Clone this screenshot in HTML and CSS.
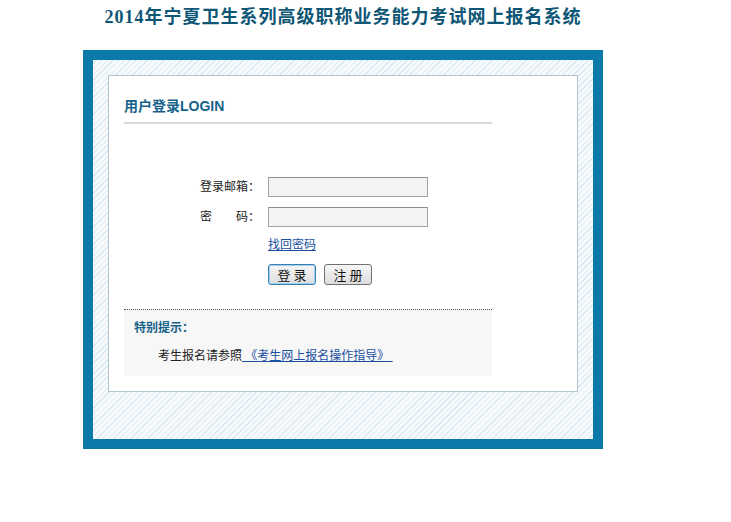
FILE: index.html
```html
<!DOCTYPE html>
<html lang="zh-CN">

<head>
    <meta charset="UTF-8">
    <title>2014年宁夏卫生系列高级职称业务能力考试网上报名系统</title>
    <link rel="stylesheet" href="styles.css">
</head>

<body>
    <div class="page">
        <h1 class="site-title">2014年宁夏卫生系列高级职称业务能力考试网上报名系统</h1>

        <!-- Login frame -->
        <div class="frame">
            <div class="panel">
                <h2 class="panel-title">用户登录LOGIN</h2>

                <form class="login-form" action="#">
                    <label class="field-label" for="email">登录邮箱：</label>
                    <input class="field-input" type="text" id="email">

                    <label class="field-label" for="pwd">密&emsp;&emsp;码：</label>
                    <input class="field-input" type="password" id="pwd">

                    <a class="forgot-link" href="#">找回密码</a>

                    <div class="buttons">
                        <button type="button" class="btn btn-default">登 录</button>
                        <button type="button" class="btn">注 册</button>
                    </div>
                </form>

                <!-- Notice -->
                <div class="notice">
                    <p class="notice-title">特别提示：</p>
                    <p class="notice-text">考生报名请参照<a href="#">&nbsp;《考生网上报名操作指导》&nbsp;</a></p>
                </div>
            </div>
        </div>
    </div>
</body>

</html>
```

FILE: styles.css
```css
/* General */
body {
    margin: 0;
    font-family: "Liberation Sans", "Noto Sans CJK SC", sans-serif;
    font-size: 12px;
    color: #222;
    background: #fff;
}

.page {
    width: 520px;
    margin-left: 83px;
}

/* Site title */
.site-title {
    margin: 0;
    height: 50px;
    padding-top: 6px;
    box-sizing: border-box;
    text-align: center;
    font-family: "Liberation Serif", "Noto Sans CJK SC", serif;
    font-size: 18px;
    line-height: 22px;
    font-weight: bold;
    letter-spacing: 1px;
    color: #0e5676;
}

/* Blue frame with hatched fill */
.frame {
    border: 10px solid #0b7aa8;
    padding: 15px 15px 47px;
    background: repeating-linear-gradient(135deg, #f7fafc 0 2px, #dce9f1 2px 3px, #f7fafc 3px 4px);
}

.panel {
    background: #fff;
    border: 1px solid #b3c6d0;
    padding: 0 15px 15px;
}

.panel-title {
    width: 368px;
    margin: 20px 0 0;
    padding-bottom: 6px;
    border-bottom: 2px solid #d9d9d9;
    font-size: 14px;
    line-height: 20px;
    font-weight: bold;
    color: #16628a;
}

/* Form */
.login-form {
    display: grid;
    grid-template-columns: 136px 160px;
    column-gap: 8px;
    row-gap: 10px;
    margin-top: 53px;
    align-items: center;
}

.field-label {
    text-align: right;
    line-height: 20px;
}

.field-input {
    width: 160px;
    height: 20px;
    box-sizing: border-box;
    margin: 0;
    border: 1px solid #a3a3a3;
    border-top-color: #8e8e8e;
    background: #f3f3f3;
}

.forgot-link {
    grid-column: 2;
    justify-self: start;
    line-height: 16px;
    color: #1a4fa0;
}

.buttons {
    grid-column: 2;
    display: flex;
    gap: 8px;
    margin-top: 1px;
}

.btn {
    width: 48px;
    height: 21px;
    padding: 0;
    font-family: "Noto Sans CJK SC", sans-serif;
    font-size: 13px;
    line-height: 17px;
    color: #111;
    background: linear-gradient(#f6f6f6, #dedede);
    border: 1px solid #707070;
    border-radius: 3px;
}

.btn-default {
    border-color: #3c7fb1;
    box-shadow: inset 0 0 0 1px #9fd0f0;
}

/* Notice box */
.notice {
    width: 368px;
    box-sizing: border-box;
    margin-top: 24px;
    padding: 10px 10px 12px;
    border-top: 1px dotted #555;
    background: #f7f7f7;
}

.notice p {
    margin: 0;
    line-height: 16px;
}

.notice-title {
    font-weight: bold;
    color: #16628a;
}

.notice-text {
    margin-top: 12px !important;
    padding-left: 24px;
}

.notice-text a {
    color: #1a4fa0;
}
```
